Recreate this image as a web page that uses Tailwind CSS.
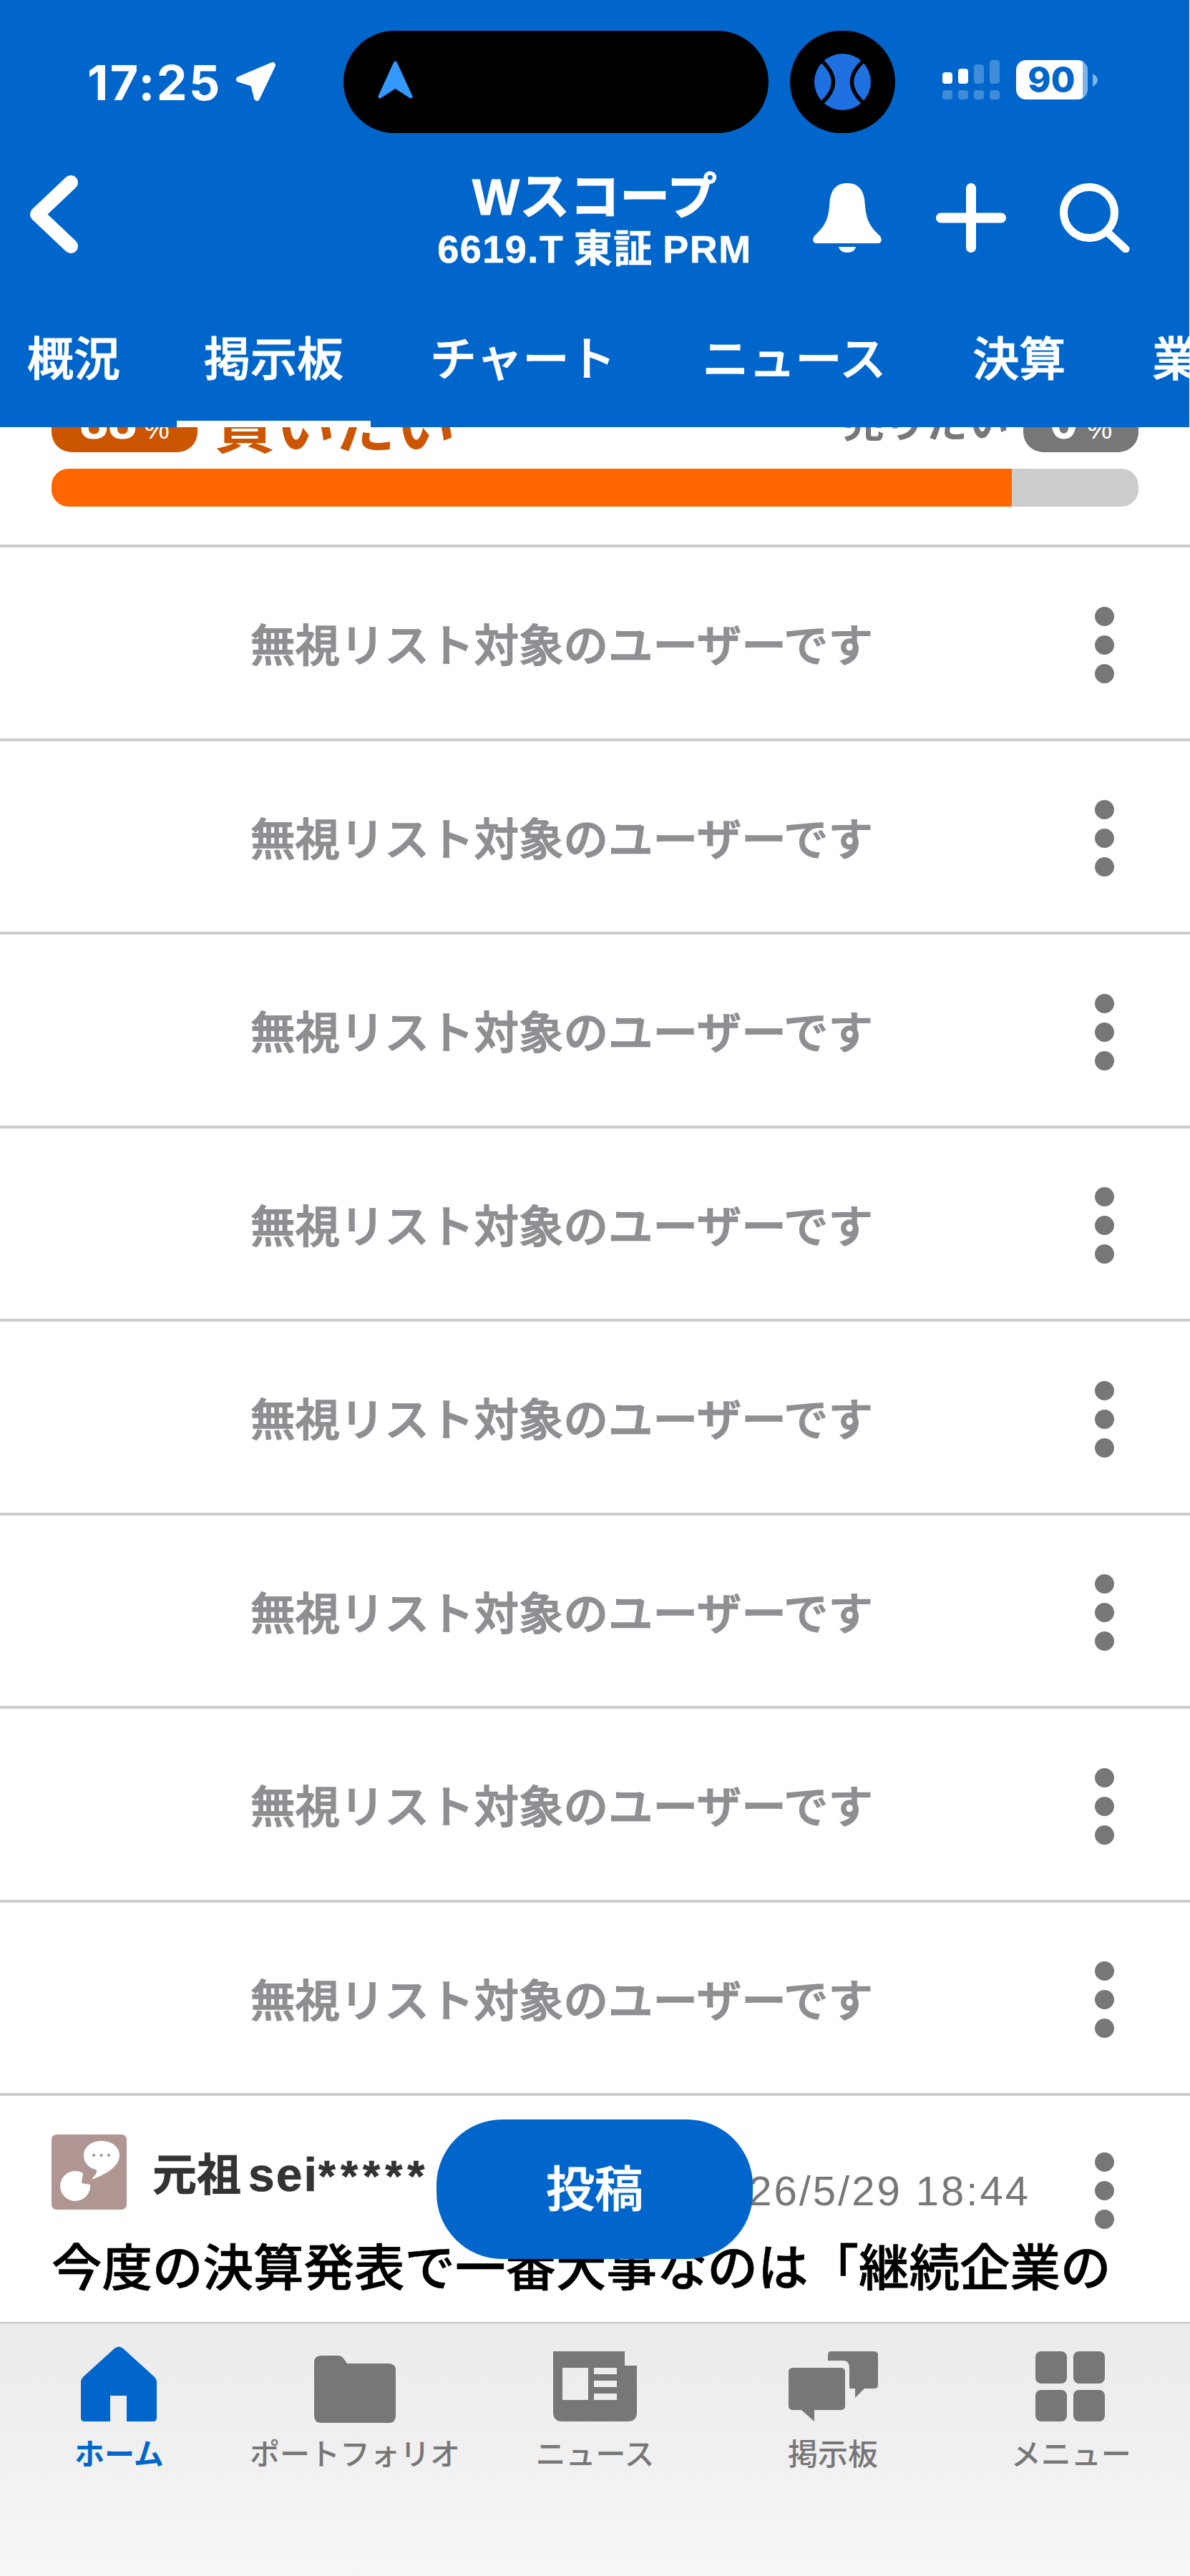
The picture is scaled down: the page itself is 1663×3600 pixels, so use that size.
<!DOCTYPE html>
<html lang="ja">
<head>
<meta charset="utf-8">
<script src="https://cdn.jsdelivr.net/npm/@tailwindcss/browser@4"></script>
</head>
<body class="bg-white">
<div class="relative flex flex-col w-[1663px] h-[3600px] overflow-hidden bg-white font-['Liberation_Sans','Noto_Sans_CJK_JP',sans-serif]">

  <!-- Header -->
  <header class="relative z-10 flex flex-col shrink-0 w-[1662px] h-[597px] bg-[#0066cc] text-white">
    <!-- Status bar -->
    <div class="flex items-start h-[186px] pt-[43px]">
      <div class="flex items-center w-[480px] h-[143px] pl-[122px]">
        <span class="font-['Inter',sans-serif] font-bold text-[68px] leading-none tracking-[2.5px]">17:25</span>
        <svg class="ml-[19px] -mt-[2px]" width="57" height="56" viewBox="0 0 57 56"><path d="M5 25 L52 5 L30 51 L25 31 Z" fill="#fff" stroke="#fff" stroke-width="8" stroke-linejoin="round"/></svg>
      </div>
      <div class="flex items-center w-[594px] h-[143px] pl-[48px] rounded-full bg-black">
        <svg class="-mt-[6px]" width="49" height="54" viewBox="0 0 49 54"><path d="M24.5 3 L46 50 L24.5 36 L3 50 Z" fill="#3399ff" stroke="#3399ff" stroke-width="5" stroke-linejoin="round"/></svg>
      </div>
      <div class="flex items-center justify-center w-[147px] h-[143px] ml-[30px] rounded-full bg-black">
        <svg width="79" height="79" viewBox="0 0 79 79"><circle cx="39.5" cy="39.5" r="39.5" fill="#1f70e0"/><path d="M8 8 Q45 39.5 8 71 M71 8 Q34 39.5 71 71" fill="none" stroke="#000" stroke-width="5.5"/></svg>
      </div>
      <div class="flex flex-col gap-[9px] ml-[66px] mt-[41px]">
        <div class="flex items-end gap-[8.5px] h-[33px]">
          <span class="w-[13.5px] h-[16px] rounded-[4px] bg-white"></span>
          <span class="w-[13.5px] h-[21px] rounded-[4px] bg-white"></span>
          <span class="w-[13.5px] h-[27px] rounded-[4px] bg-white/25"></span>
          <span class="w-[13.5px] h-[33px] rounded-[4px] bg-white/25"></span>
        </div>
        <div class="flex gap-[8.5px]">
          <span class="w-[13.5px] h-[13px] rounded-[4px] bg-white/25"></span>
          <span class="w-[13.5px] h-[13px] rounded-[4px] bg-white/25"></span>
          <span class="w-[13.5px] h-[13px] rounded-[4px] bg-white/25"></span>
          <span class="w-[13.5px] h-[13px] rounded-[4px] bg-white/25"></span>
        </div>
      </div>
      <div class="flex items-center ml-[23px] mt-[41px]">
        <div class="flex items-center justify-center w-[100px] h-[55px] rounded-[14px] bg-[linear-gradient(90deg,#ffffff_93%,#ffffff80_93%)] font-['Inter',sans-serif] font-extrabold text-[49px] leading-none text-[#0066cc]">90</div>
        <svg class="ml-[7px]" width="7" height="18" viewBox="0 0 7 18"><path d="M0 0 Q7 4 7 9 Q7 14 0 18 Z" fill="#ffffff" fill-opacity="0.5"/></svg>
      </div>
    </div>

    <!-- Title row -->
    <div class="grid grid-cols-[1fr_auto_1fr] items-start h-[132px] mt-[55px]">
      <div class="pl-[42px] pt-[4px]">
        <svg width="67" height="109" viewBox="0 0 67 109"><path d="M57 10 L10 54.5 L57 99" fill="none" stroke="#fff" stroke-width="20" stroke-linecap="round" stroke-linejoin="round"/></svg>
      </div>
      <div class="flex flex-col items-center -mt-[4px]">
        <div class="text-[70px] leading-[78px] font-bold [-webkit-text-stroke:1px_#ffffff]">Wスコープ</div>
        <div class="text-[54px] leading-[60px] font-bold mt-[3px] tracking-[1.5px] [word-spacing:-3px] [-webkit-text-stroke:0.5px_#ffffff] whitespace-nowrap">6619.T 東証 PRM</div>
      </div>
      <div class="flex justify-end gap-[75px] pr-[83px] pt-[15px]">
        <svg width="98" height="97" viewBox="0 0 98 97"><path d="M49 0 C33 0 26 10 24.5 26 C23 48 20 58 4 73 C0 77 0 84 6 84 H92 C98 84 98 77 94 73 C78 58 75 48 73.5 26 C72 10 65 0 49 0 Z M37 89 H61 C60 94 55 97 49 97 C43 97 38 94 37 89 Z" fill="#fff"/></svg>
        <svg width="98" height="97" viewBox="0 0 98 97"><path d="M49 7 V90 M7 48.5 H91" fill="none" stroke="#fff" stroke-width="14" stroke-linecap="round"/></svg>
        <svg width="98" height="97" viewBox="0 0 98 97"><circle cx="41" cy="41" r="35.5" fill="none" stroke="#fff" stroke-width="11"/><path d="M66 68 L92 92" fill="none" stroke="#fff" stroke-width="11" stroke-linecap="round"/></svg>
      </div>
    </div>

    <!-- Tabs -->
    <nav class="flex flex-1 gap-[45px] overflow-hidden text-[65px] font-medium whitespace-nowrap leading-none [-webkit-text-stroke:1px_#ffffff]">
      <div class="flex shrink-0 items-start pt-[97px] px-[38px] border-b-[9px] border-transparent">概況</div>
      <div class="flex shrink-0 items-start pt-[97px] px-[38px] -ml-[4px] border-b-[9px] border-white">掲示板</div>
      <div class="flex shrink-0 items-start pt-[97px] px-[38px] border-b-[9px] border-transparent">チャート</div>
      <div class="flex shrink-0 items-start pt-[97px] px-[38px] border-b-[9px] border-transparent">ニュース</div>
      <div class="flex shrink-0 items-start pt-[97px] px-[38px] border-b-[9px] border-transparent">決算</div>
      <div class="flex shrink-0 items-start pt-[97px] px-[38px] border-b-[9px] border-transparent">業績</div>
    </nav>
  </header>

  <!-- Scrolled content -->
  <main class="relative flex-1 min-h-0 overflow-hidden">
    <section class="-mt-[55px] px-[72px] pb-[53px] border-b-4 border-[#cccccc]">
      <div class="flex items-center justify-between h-[90px]">
        <div class="flex items-center gap-[24px]">
          <div class="flex items-baseline justify-center w-[204px] h-[90px] rounded-[28px] bg-[#cc5500] text-white font-bold">
            <span class="text-[72px] leading-[92px]">88</span><span class="ml-[10px] text-[40px] font-normal">%</span>
          </div>
          <span class="mt-[20px] text-[84px] leading-none font-bold text-[#cc5500] whitespace-nowrap">買いたい</span>
        </div>
        <div class="flex items-center gap-[20px]">
          <span class="mt-[8px] text-[58px] leading-none font-bold text-[#777777] whitespace-nowrap">売りたい</span>
          <div class="flex items-baseline justify-center w-[161px] h-[90px] rounded-[28px] bg-[#777777] text-white font-bold">
            <span class="text-[72px] leading-[92px]">0</span><span class="ml-[12px] text-[40px] font-normal">%</span>
          </div>
        </div>
      </div>
      <div class="flex mt-[23px] h-[53px] rounded-[24px] overflow-hidden bg-[#cccccc]">
        <div class="w-[1341.5px] bg-[#ff6600]"></div>
      </div>
    </section>

    <div class="flex items-center justify-between h-[270.5px] pt-[6px] pl-[350px] pr-[106px] border-b-4 border-[#cccccc]">
      <span class="mt-[4px] text-[62.5px] leading-none font-medium text-[#8e8e93] [-webkit-text-stroke:1.5px_#8e8e93] whitespace-nowrap">無視リスト対象のユーザーです</span>
      <div class="flex flex-col gap-[13px]"><span class="size-[27px] rounded-full bg-[#777777]"></span><span class="size-[27px] rounded-full bg-[#777777]"></span><span class="size-[27px] rounded-full bg-[#777777]"></span></div>
    </div>
    <div class="flex items-center justify-between h-[270.5px] pt-[6px] pl-[350px] pr-[106px] border-b-4 border-[#cccccc]">
      <span class="mt-[4px] text-[62.5px] leading-none font-medium text-[#8e8e93] [-webkit-text-stroke:1.5px_#8e8e93] whitespace-nowrap">無視リスト対象のユーザーです</span>
      <div class="flex flex-col gap-[13px]"><span class="size-[27px] rounded-full bg-[#777777]"></span><span class="size-[27px] rounded-full bg-[#777777]"></span><span class="size-[27px] rounded-full bg-[#777777]"></span></div>
    </div>
    <div class="flex items-center justify-between h-[270.5px] pt-[6px] pl-[350px] pr-[106px] border-b-4 border-[#cccccc]">
      <span class="mt-[4px] text-[62.5px] leading-none font-medium text-[#8e8e93] [-webkit-text-stroke:1.5px_#8e8e93] whitespace-nowrap">無視リスト対象のユーザーです</span>
      <div class="flex flex-col gap-[13px]"><span class="size-[27px] rounded-full bg-[#777777]"></span><span class="size-[27px] rounded-full bg-[#777777]"></span><span class="size-[27px] rounded-full bg-[#777777]"></span></div>
    </div>
    <div class="flex items-center justify-between h-[270.5px] pt-[6px] pl-[350px] pr-[106px] border-b-4 border-[#cccccc]">
      <span class="mt-[4px] text-[62.5px] leading-none font-medium text-[#8e8e93] [-webkit-text-stroke:1.5px_#8e8e93] whitespace-nowrap">無視リスト対象のユーザーです</span>
      <div class="flex flex-col gap-[13px]"><span class="size-[27px] rounded-full bg-[#777777]"></span><span class="size-[27px] rounded-full bg-[#777777]"></span><span class="size-[27px] rounded-full bg-[#777777]"></span></div>
    </div>
    <div class="flex items-center justify-between h-[270.5px] pt-[6px] pl-[350px] pr-[106px] border-b-4 border-[#cccccc]">
      <span class="mt-[4px] text-[62.5px] leading-none font-medium text-[#8e8e93] [-webkit-text-stroke:1.5px_#8e8e93] whitespace-nowrap">無視リスト対象のユーザーです</span>
      <div class="flex flex-col gap-[13px]"><span class="size-[27px] rounded-full bg-[#777777]"></span><span class="size-[27px] rounded-full bg-[#777777]"></span><span class="size-[27px] rounded-full bg-[#777777]"></span></div>
    </div>
    <div class="flex items-center justify-between h-[270.5px] pt-[6px] pl-[350px] pr-[106px] border-b-4 border-[#cccccc]">
      <span class="mt-[4px] text-[62.5px] leading-none font-medium text-[#8e8e93] [-webkit-text-stroke:1.5px_#8e8e93] whitespace-nowrap">無視リスト対象のユーザーです</span>
      <div class="flex flex-col gap-[13px]"><span class="size-[27px] rounded-full bg-[#777777]"></span><span class="size-[27px] rounded-full bg-[#777777]"></span><span class="size-[27px] rounded-full bg-[#777777]"></span></div>
    </div>
    <div class="flex items-center justify-between h-[270.5px] pt-[6px] pl-[350px] pr-[106px] border-b-4 border-[#cccccc]">
      <span class="mt-[4px] text-[62.5px] leading-none font-medium text-[#8e8e93] [-webkit-text-stroke:1.5px_#8e8e93] whitespace-nowrap">無視リスト対象のユーザーです</span>
      <div class="flex flex-col gap-[13px]"><span class="size-[27px] rounded-full bg-[#777777]"></span><span class="size-[27px] rounded-full bg-[#777777]"></span><span class="size-[27px] rounded-full bg-[#777777]"></span></div>
    </div>
    <div class="flex items-center justify-between h-[270.5px] pt-[6px] pl-[350px] pr-[106px] border-b-4 border-[#cccccc]">
      <span class="mt-[4px] text-[62.5px] leading-none font-medium text-[#8e8e93] [-webkit-text-stroke:1.5px_#8e8e93] whitespace-nowrap">無視リスト対象のユーザーです</span>
      <div class="flex flex-col gap-[13px]"><span class="size-[27px] rounded-full bg-[#777777]"></span><span class="size-[27px] rounded-full bg-[#777777]"></span><span class="size-[27px] rounded-full bg-[#777777]"></span></div>
    </div>

    <!-- Post -->
    <article class="pt-[54px] pl-[72px] pr-[106px]">
      <div class="flex items-start">
        <svg class="shrink-0 rounded-[7px]" width="105" height="105" viewBox="0 0 105 105"><rect width="105" height="105" fill="#b09692"/><path d="M70 9 C85 9 95 18 95 29 C95 45 75 56 56 63 C60 57 66 52 62 49 C50 46 45 38 45 29 C45 18 55 9 70 9 Z" fill="#fff"/><path d="M44 54 L42 68 L54 70 A21 21 0 1 1 44 54 Z" fill="#fff"/><circle cx="59" cy="29" r="2" fill="#a08a88"/><circle cx="69.5" cy="29" r="2" fill="#a08a88"/><circle cx="80" cy="29" r="2" fill="#a08a88"/></svg>
        <span class="ml-[36px] mt-[23px] text-[62px] leading-none font-bold text-[#333333] [-webkit-text-stroke:0.7px_#333333] whitespace-nowrap">元祖<span class="ml-[10px] text-[66px] tracking-[2px]">sei</span><span class="tracking-[7px]">*****</span></span>
        <span class="ml-auto mt-[50px] text-[58px] leading-none tracking-[3px] text-[#777777] whitespace-nowrap">2026/5/29 18:44</span>
        <div class="flex flex-col gap-[13px] ml-[90px] mt-[25px]"><span class="size-[27px] rounded-full bg-[#777777]"></span><span class="size-[27px] rounded-full bg-[#777777]"></span><span class="size-[27px] rounded-full bg-[#777777]"></span></div>
      </div>
      <p class="mt-[11px] text-[70.5px] leading-[90px] font-medium text-black [-webkit-text-stroke:0.7px_#000000] whitespace-nowrap">今度の決算発表で一番大事なのは「継続企業の</p>
    </article>

    <!-- Floating post button -->
    <button class="absolute left-[610px] top-[2365px] flex items-center justify-center w-[442px] h-[195px] rounded-[92px] bg-[#0066cc] text-white text-[68px] font-medium [-webkit-text-stroke:1px_#ffffff]">投稿</button>
  </main>

  <!-- Bottom tab bar -->
  <footer class="grid grid-cols-5 shrink-0 h-[355px] pt-[32px] border-t-2 border-[#c4c4c4] bg-linear-to-b from-[#ebebeb] to-[#f7f5f5] text-[42px] leading-none font-medium text-[#777777]">
    <div class="flex flex-col items-center">
      <svg class="-ml-[1px]" width="106" height="105" viewBox="0 0 106 105"><path d="M47 3 Q53 -2 59 3 L102 42 Q106 46 106 50 V100 Q106 105 101 105 H64 V69 H41 V105 H5 Q0 105 0 100 V50 Q0 46 4 42 Z" fill="#0066cc"/></svg>
      <span class="mt-[26px] font-bold text-[#0066cc]">ホーム</span>
    </div>
    <div class="flex flex-col items-center">
      <div class="flex items-end h-[105px]"><svg class="-ml-[6px] -mb-[2px]" width="114" height="94" viewBox="0 0 114 94"><path d="M10 0 H33 Q38 0 41 4 L46 11 H104 Q114 11 114 21 V84 Q114 94 104 94 H10 Q0 94 0 84 V10 Q0 0 10 0 Z" fill="#777777"/></svg></div>
      <span class="mt-[26px] whitespace-nowrap -ml-[6px]">ポートフォリオ</span>
    </div>
    <div class="flex flex-col items-center">
      <div class="flex items-end h-[105px]"><svg width="117" height="98" viewBox="0 0 117 98"><path fill-rule="evenodd" d="M0 0 H100 V20 H117 V85 Q117 98 104 98 H13 Q0 98 0 85 Z M13 23 V68 H49 V23 Z M57 23 V32 H89 V23 Z M57 41 V50 H89 V41 Z M57 59 V68 H89 V59 Z" fill="#777777"/></svg></div>
      <span class="mt-[26px]">ニュース</span>
    </div>
    <div class="flex flex-col items-center">
      <div class="flex items-end h-[105px]"><svg width="125" height="98" viewBox="0 0 125 98"><path d="M55 13 V5 Q55 0 60 0 H119 Q125 0 125 5 V47 Q125 52 119 52 H106 L93 65 V52 H85 V23 Q85 13 76 13 Z" fill="#777777"/><path d="M6 23 H73 Q79 23 79 29 V76 Q79 82 73 82 H36 V98 L18 82 H6 Q0 82 0 76 V29 Q0 23 6 23 Z" fill="#777777"/></svg></div>
      <span class="mt-[26px]">掲示板</span>
    </div>
    <div class="flex flex-col items-center">
      <div class="grid grid-cols-[44px_44px] grid-rows-[44.5px_44.5px] gap-x-[9px] gap-y-[9px] mt-[7px] -ml-[2px] h-[98px]">
        <span class="rounded-[8px] bg-[#777777]"></span><span class="rounded-[8px] bg-[#777777]"></span><span class="rounded-[8px] bg-[#777777]"></span><span class="rounded-[8px] bg-[#777777]"></span>
      </div>
      <span class="mt-[26px]">メニュー</span>
    </div>
  </footer>
</div>
</body>
</html>
